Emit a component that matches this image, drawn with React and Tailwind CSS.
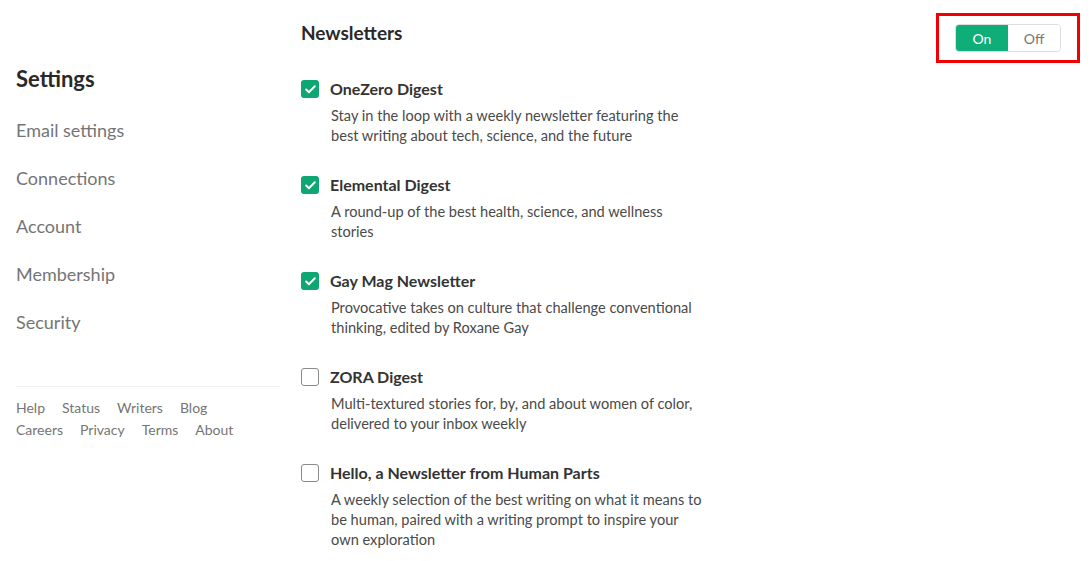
import { Check } from "lucide-react";

const navItems = ["Email settings", "Connections", "Account", "Membership", "Security"];

const newsletters = [
  {
    title: "OneZero Digest",
    desc: "Stay in the loop with a weekly newsletter featuring the best writing about tech, science, and the future",
    on: true,
  },
  {
    title: "Elemental Digest",
    desc: "A round-up of the best health, science, and wellness stories",
    on: true,
  },
  {
    title: "Gay Mag Newsletter",
    desc: "Provocative takes on culture that challenge conventional thinking, edited by Roxane Gay",
    on: true,
  },
  {
    title: "ZORA Digest",
    desc: "Multi-textured stories for, by, and about women of color, delivered to your inbox weekly",
    on: false,
  },
  {
    title: "Hello, a Newsletter from Human Parts",
    desc: "A weekly selection of the best writing on what it means to be human, paired with a writing prompt to inspire your own exploration",
    on: false,
  },
];

function Checkbox({ on }) {
  return on ? (
    <span className="flex h-[18px] w-[18px] shrink-0 items-center justify-center rounded-[3px] bg-[#10a674]">
      <Check className="h-[13px] w-[13px] text-white" strokeWidth={3.5} />
    </span>
  ) : (
    <span className="block h-[18px] w-[18px] shrink-0 rounded-[3px] border-[1.5px] border-[#8a8a8a] bg-white" />
  );
}

function Sidebar() {
  return (
    <aside className="w-[264px] shrink-0 pt-[64px]">
      <h1 className="text-[22px] font-bold leading-[30px] text-[#292929]">Settings</h1>
      <nav className="mt-[23px] flex flex-col">
        {navItems.map((item) => (
          <a key={item} className="h-[48px] text-[18px] leading-[26px] text-[#757575]">
            {item}
          </a>
        ))}
      </nav>
      <div className="mt-[29px] border-t border-[#eeeeee] pt-[10px] text-[14px] leading-[22px] text-[#757575]">
        <div className="flex gap-[17px]">
          <span>Help</span>
          <span>Status</span>
          <span>Writers</span>
          <span>Blog</span>
        </div>
        <div className="flex gap-[17px]">
          <span>Careers</span>
          <span>Privacy</span>
          <span>Terms</span>
          <span>About</span>
        </div>
      </div>
    </aside>
  );
}

export default function App() {
  return (
    <div className="flex min-h-[561px] bg-white pl-[16px] font-['Lato',sans-serif] text-[#292929]">
      <Sidebar />
      <main className="ml-[21px] flex-1 pt-[20px]">
        <div className="flex items-start justify-between">
          <h2 className="text-[19px] font-bold leading-[26px] text-[#292929]">Newsletters</h2>
          <div className="mr-[12px] mt-[-7px] border-[3px] border-[#f00000] px-[16px] py-[8px]">
            <div className="flex h-[28px] w-[106px] overflow-hidden rounded-[4px] border border-[#dddddd] text-[14px]">
              <button className="flex-1 bg-[#0fae79] text-white">On</button>
              <button className="flex-1 bg-white text-[#757575]">Off</button>
            </div>
          </div>
        </div>
        <ul className="mt-[13px] flex flex-col">
          {newsletters.map((n) => (
            <li key={n.title} className="flex h-[96px] gap-[11px]">
              <div className="pt-[4px]">
                <Checkbox on={n.on} />
              </div>
              <div>
                <h3 className="text-[16px] font-bold leading-[26px] text-[#333333]">{n.title}</h3>
                <p className="mt-[4px] w-[375px] pl-px text-[14.6px] leading-[20px] text-[#4a4a4a]">{n.desc}</p>
              </div>
            </li>
          ))}
        </ul>
      </main>
    </div>
  );
}
